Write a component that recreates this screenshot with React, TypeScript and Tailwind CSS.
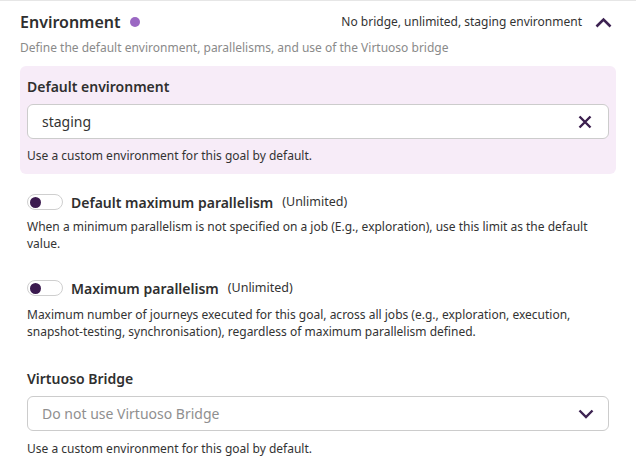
import React from "react";

function Toggle() {
  return (
    <div className="w-9 h-4 rounded-full border border-[#cfcfcf] bg-white flex items-center pl-[2px] shrink-0">
      <div className="w-[11px] h-[11px] rounded-full bg-[#3b1a4f]" />
    </div>
  );
}

export default function App() {
  return (
    <div
      className="w-[636px] h-[458px] bg-white border-t border-[#e6e6e6] overflow-hidden text-[#333]"
      style={{ fontFamily: '"Noto Sans", "Open Sans", sans-serif' }}
    >
      <div className="px-5">
        <div className="flex items-center justify-between h-[41px] pt-[1px]">
          <div className="flex items-center gap-[9px]">
            <span className="text-[16px] font-semibold text-[#2f2f2f]">Environment</span>
            <span className="w-[10px] h-[10px] rounded-full bg-[#9b68c3]" />
          </div>
          <div className="flex items-center gap-[13px] pr-[4px]">
            <span className="text-[12px] text-[#333]">No bridge, unlimited, staging environment</span>
            <svg width="17" height="11" viewBox="0 0 17 11" fill="none">
              <path d="M1.5 9.5 L8.5 2.5 L15.5 9.5" stroke="#3d2352" strokeWidth="2.6" />
            </svg>
          </div>
        </div>
        <div className="text-[12px] text-[#8a8a8a] leading-[13px] h-[13px] mt-[-1px]">
          Define the default environment, parallelisms, and use of the Virtuoso bridge
        </div>
        <div className="mt-[12px] bg-[#f7ecf8] rounded-[6px] px-[7px] pt-[11px] pb-[10px]">
          <div className="text-[14px] font-semibold text-[#2f2f2f] leading-[19px]">Default environment</div>
          <div className="mt-[8px] h-[35px] bg-white border border-[#cccccc] rounded-[6px] flex items-center justify-between pl-[14px] pr-[16px]">
            <span className="text-[14px] text-[#333]">staging</span>
            <svg width="14" height="14" viewBox="0 0 14 14" fill="none">
              <path d="M1.5 1.5 L12.5 12.5 M12.5 1.5 L1.5 12.5" stroke="#3b1f4e" strokeWidth="2.4" />
            </svg>
          </div>
          <div className="mt-[9px] text-[12px] text-[#333] leading-[16px]">
            Use a custom environment for this goal by default.
          </div>
        </div>
        <div className="px-[7px]">
          <div className="mt-[19px] flex items-center gap-[8px] h-[18px]">
            <Toggle />
            <span className="text-[14px] font-semibold text-[#2f2f2f]">Default maximum parallelism</span>
            <span className="text-[12.5px] text-[#333] ml-[1px]">(Unlimited)</span>
          </div>
          <div className="mt-[7px] text-[12px] text-[#333] leading-[17px]">
            When a minimum parallelism is not specified on a job (E.g., exploration), use this limit as the default value.
          </div>
          <div className="mt-[27px] flex items-center gap-[8px] h-[18px]">
            <Toggle />
            <span className="text-[14px] font-semibold text-[#2f2f2f]">Maximum parallelism</span>
            <span className="text-[12.5px] text-[#333] ml-[1px]">(Unlimited)</span>
          </div>
          <div className="mt-[9px] text-[12px] text-[#333] leading-[17px] pr-[20px]">
            Maximum number of journeys executed for this goal, across all jobs (e.g., exploration, execution, snapshot-testing, synchronisation), regardless of maximum parallelism defined.
          </div>
          <div className="mt-[29px] text-[14px] font-semibold text-[#2f2f2f] leading-[19px]">Virtuoso Bridge</div>
          <div className="mt-[8px] h-[35px] bg-white border border-[#cccccc] rounded-[6px] flex items-center justify-between pl-[14px] pr-[14px]">
            <span className="text-[14px] text-[#8f8f8f]">Do not use Virtuoso Bridge</span>
            <svg width="16" height="10" viewBox="0 0 16 10" fill="none">
              <path d="M1.5 1.5 L8 8 L14.5 1.5" stroke="#3d2352" strokeWidth="2.4" />
            </svg>
          </div>
          <div className="mt-[10px] text-[12px] text-[#333] leading-[16px]">
            Use a custom environment for this goal by default.
          </div>
        </div>
      </div>
    </div>
  );
}
